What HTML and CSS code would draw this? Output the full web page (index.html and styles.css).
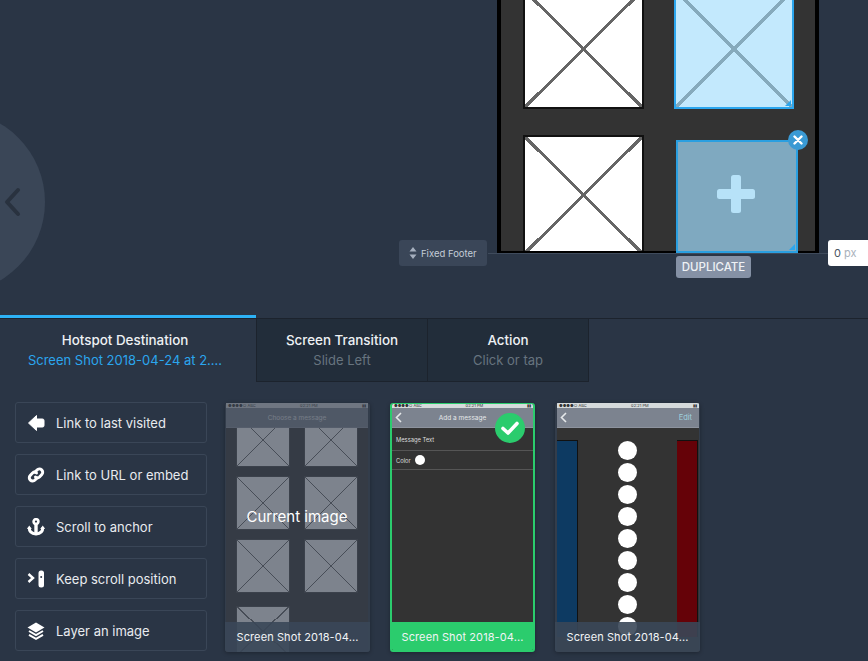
FILE: index.html
```html
<!DOCTYPE html>
<html>
<head>
<title>Hotspot</title>
<link rel="stylesheet" href="styles.css">
</head>
<body>

<div class="stage">
    <div class="prev">
        <svg width="20" height="30" viewBox="0 0 20 30"><path d="M16 3 L5 15 L16 27" fill="none" stroke="#29323f" stroke-width="4" stroke-linecap="round" stroke-linejoin="round"/></svg>
    </div>

    <div class="phone">
        <div class="tile"></div>
        <div class="tile tile_on"><span class="corner"></span></div>
        <div class="tile"></div>
    </div>

    <div class="hotspot">
        <svg width="38" height="38" viewBox="0 0 38 38"><rect x="14" y="0" width="10" height="38" rx="2.5" fill="#b7e2f8"/><rect x="0" y="14" width="38" height="10" rx="2.5" fill="#b7e2f8"/></svg>
        <span class="corner"></span>
    </div>
    <div class="close">
        <svg width="10" height="10" viewBox="0 0 10 10"><path d="M1.5 1.5 L8.5 8.5 M8.5 1.5 L1.5 8.5" stroke="#fff" stroke-width="2.4" stroke-linecap="round"/></svg>
    </div>
    <div class="dup">DUPLICATE</div>

    <div class="footer_line"></div>
    <div class="fixed_footer">
        <svg width="8" height="12" viewBox="0 0 8 12"><path d="M4 0 L7.5 4.5 H0.5 Z M4 12 L7.5 7.5 H0.5 Z" fill="#a5afbe"/></svg>
        Fixed Footer
    </div>
    <div class="px_input">0 <span>px</span></div>
</div>

<div class="tabs">
    <div class="tab tab_on">
        <b>Hotspot Destination</b>
        <span>Screen Shot 2018-04-24 at 2....</span>
    </div>
    <div class="tab tab_w2">
        <b>Screen Transition</b>
        <span>Slide Left</span>
    </div>
    <div class="tab tab_w3">
        <b>Action</b>
        <span>Click or tap</span>
    </div>
</div>

<div class="panel">
    <div class="actions">
        <div class="action">
            <svg width="18" height="18" viewBox="0 0 18 18"><path d="M1.5 9 L9.5 1.5 V5 H15.5 Q17 5 17 6.5 V11.5 Q17 13 15.5 13 H9.5 V16.5 Z" fill="#fff" stroke="#fff" stroke-linejoin="round"/></svg>
            Link to last visited
        </div>
        <div class="action">
            <svg width="18" height="18" viewBox="0 0 18 18"><g fill="none" stroke="#fff" stroke-width="3" stroke-linecap="round"><path d="M8.5 5.5 L10 4 A3.2 3.2 0 0 1 14.8 8.5 L12.5 11 A3 3 0 0 1 8.5 11"/><path d="M9.5 12.5 L8 14 A3.2 3.2 0 0 1 3.2 9.5 L5.5 7 A3 3 0 0 1 9.5 7"/></g></svg>
            Link to URL or embed
        </div>
        <div class="action">
            <svg width="18" height="18" viewBox="0 0 18 18"><g fill="none" stroke="#fff"><circle cx="9" cy="3.6" r="2.4" stroke-width="2.6"/><path d="M9 6 V16" stroke-width="3.4"/><path d="M2.2 9.5 Q2.2 15.5 9 16 Q15.8 15.5 15.8 9.5" stroke-width="3"/></g><path d="M0 11 L2.2 7.5 L4.8 11 Z M13.2 11 L15.8 7.5 L18 11 Z" fill="#fff"/></svg>
            Scroll to anchor
        </div>
        <div class="action">
            <svg width="18" height="18" viewBox="0 0 18 18"><path d="M1.5 4 L6 8 L1.5 12" fill="none" stroke="#fff" stroke-width="2.4"/><rect x="11.5" y="0.5" width="5.5" height="17" rx="2.5" fill="#fff"/><circle cx="14.2" cy="7" r="1" fill="#2a3546"/></svg>
            Keep scroll position
        </div>
        <div class="action">
            <svg width="18" height="18" viewBox="0 0 18 18"><path d="M9 0.5 L17.5 5.5 L9 10.5 L0.5 5.5 Z" fill="#fff"/><path d="M2 9 L9 13 L16 9 M2 12.8 L9 16.8 L16 12.8" fill="none" stroke="#fff" stroke-width="2"/></svg>
            Layer an image
        </div>
    </div>

    <div class="cards">
        <div class="card">
            <div class="shot">
                <div class="status"><span>●●●●○ ABC</span><span>02:21 PM</span><span>▮▮</span></div>
                <div class="navbar"><span class="nav_title">Choose a message</span></div>
                <div class="mini_grid">
                    <div class="mini"></div><div class="mini"></div>
                    <div class="mini"></div><div class="mini"></div>
                    <div class="mini"></div><div class="mini"></div>
                    <div class="mini mini_last"></div>
                </div>
                <div class="dim"></div>
                <div class="current">Current image</div>
            </div>
            <div class="caption">Screen Shot 2018-04...</div>
        </div>

        <div class="card card_on">
            <div class="shot">
                <div class="status"><span>●●●●○ ABC</span><span>02:21 PM</span><span>▮▮</span></div>
                <div class="navbar">
                    <svg class="nav_back" width="7" height="11" viewBox="0 0 7 11"><path d="M6 1 L1.5 5.5 L6 10" fill="none" stroke="#e5e8ea" stroke-width="1.6"/></svg>
                    <span class="nav_title">Add a message</span>
                </div>
                <div class="row row_first">Message Text</div>
                <div class="row">Color <i class="dot"></i></div>
            </div>
            <div class="check">
                <svg width="18" height="14" viewBox="0 0 18 14"><path d="M2 7.5 L7 12 L16 2.5" fill="none" stroke="#fff" stroke-width="3.6" stroke-linecap="round" stroke-linejoin="round"/></svg>
            </div>
            <div class="caption">Screen Shot 2018-04...</div>
        </div>

        <div class="card card_last">
            <div class="shot">
                <div class="status"><span>●●●●○ ABC</span><span>02:21 PM</span><span>▮▮</span></div>
                <div class="navbar">
                    <svg class="nav_back" width="7" height="11" viewBox="0 0 7 11"><path d="M6 1 L1.5 5.5 L6 10" fill="none" stroke="#e5e8ea" stroke-width="1.6"/></svg>
                    <span class="nav_edit">Edit</span>
                </div>
                <div class="sliders">
                    <div class="bar bar_blue"></div>
                    <div class="dots">
                        <i></i><i></i><i></i><i></i><i></i><i></i><i></i><i></i><i></i>
                    </div>
                    <div class="bar bar_red"></div>
                </div>
            </div>
            <div class="caption">Screen Shot 2018-04...</div>
        </div>
    </div>
</div>

</body>
</html>
```

FILE: styles.css
```css
html, body {
    margin: 0;
    height: 100%;
}

body {
    width: 868px;
    height: 661px;
    overflow: hidden;
    background-color: #2a3545;
    font-family: Inter, "Liberation Sans", sans-serif;
    color: #fff;
}

/* top canvas */
.stage {
    position: relative;
    height: 315px;
    overflow: hidden;
}

.prev {
    position: absolute;
    top: 111px;
    left: -137px;
    width: 182px;
    height: 182px;
    border-radius: 91px;
    background-color: #3a4657;
}

.prev svg {
    position: absolute;
    top: 76px;
    left: 139px;
}

.phone {
    position: absolute;
    top: 0;
    left: 497px;
    box-sizing: border-box;
    width: 322px;
    height: 253px;
    overflow: hidden;
    background-color: #333;
    border-left: 4px solid #000;
    border-right: 4px solid #000;
    border-bottom: 2px solid #000;
    display: grid;
    grid-template-columns: 121px 120px;
    grid-auto-rows: 120px;
    column-gap: 30px;
    row-gap: 26px;
    padding-left: 22px;
}

.tile {
    position: relative;
    box-sizing: border-box;
    margin-top: -11px;
    margin-bottom: 11px;
    border: 2px solid #111;
    background-color: #fff;
    background-image:
        linear-gradient(to top right, transparent calc(50% - 1.5px), #666 calc(50% - 1.5px), #666 calc(50% + 1.5px), transparent calc(50% + 1.5px)),
        linear-gradient(to bottom right, transparent calc(50% - 1.5px), #666 calc(50% - 1.5px), #666 calc(50% + 1.5px), transparent calc(50% + 1.5px));
}

.tile_on {
    border-color: #2ba6ee;
    background-color: #c3e9fd;
    background-image:
        linear-gradient(to top right, transparent calc(50% - 1.5px), #86aabc calc(50% - 1.5px), #86aabc calc(50% + 1.5px), transparent calc(50% + 1.5px)),
        linear-gradient(to bottom right, transparent calc(50% - 1.5px), #86aabc calc(50% - 1.5px), #86aabc calc(50% + 1.5px), transparent calc(50% + 1.5px));
}

.corner {
    position: absolute;
    right: 1px;
    bottom: 1px;
    width: 0;
    height: 0;
    border-left: 6px solid transparent;
    border-bottom: 6px solid #2ba6ee;
}

.hotspot {
    position: absolute;
    top: 140px;
    left: 676px;
    box-sizing: border-box;
    width: 122px;
    height: 113px;
    border: 2px solid #2a9fe0;
    background-color: #7fa9c0;
    display: flex;
    align-items: center;
    justify-content: center;
}

.hotspot svg {
    margin: 0 2px 5px 0;
}

.close {
    position: absolute;
    top: 130px;
    left: 788px;
    width: 20px;
    height: 20px;
    border-radius: 10px;
    background-color: #3a9ad4;
    display: flex;
    align-items: center;
    justify-content: center;
}

.dup {
    position: absolute;
    top: 256px;
    left: 676px;
    width: 75px;
    height: 22px;
    line-height: 22px;
    text-align: center;
    border-radius: 3px;
    background-color: #8591a5;
    font-size: 11.5px;
    font-weight: 500;
    color: #eef1f5;
}

.footer_line {
    position: absolute;
    top: 253px;
    left: 488px;
    width: 340px;
    height: 1px;
    background-color: #3f4b5c;
}

.fixed_footer {
    position: absolute;
    top: 240px;
    left: 399px;
    box-sizing: border-box;
    width: 88px;
    height: 26px;
    padding-left: 10px;
    display: flex;
    align-items: center;
    gap: 4px;
    border-radius: 3px;
    background-color: #3a4658;
    font-size: 9.5px;
    color: #c4ccd7;
}

.px_input {
    position: absolute;
    top: 240px;
    left: 828px;
    width: 40px;
    height: 26px;
    box-sizing: border-box;
    padding-left: 6px;
    line-height: 26px;
    border-radius: 3px 0 0 3px;
    background-color: #fff;
    font-size: 11px;
    color: #4a5462;
}

.px_input span {
    color: #aab1bb;
}

/* tabs */
.tabs {
    display: flex;
    height: 63px;
    margin-top: 3px;
    border-top: 1px solid #1c232d;
}

.tab {
    box-sizing: border-box;
    display: flex;
    flex-direction: column;
    align-items: center;
    padding-top: 13px;
    gap: 4px;
    background-color: #222d3a;
    border-right: 1px solid #1c232d;
    border-bottom: 1px solid #1c232d;
}

.tab b {
    font-size: 13.4px;
    font-weight: 500;
    color: #eef1f4;
}

.tab span {
    font-size: 13px;
    color: #67747f;
}

.tab_on {
    position: relative;
    width: 256px;
    padding-right: 6px;
    background-color: #2a3545;
    border-bottom: none;
    border-right: none;
}

/* blue bar sits above the row line */
.tab_on::before {
    content: "";
    position: absolute;
    top: -4px;
    left: 0;
    width: 100%;
    height: 3px;
    background-color: #2db2f5;
}

.tab_on span {
    color: #2ba6ee;
}

.tab_w2 {
    width: 172px;
    border-left: 1px solid #1c232d;
}

.tab_w3 {
    width: 161px;
}

/* panel under the tabs */
.panel {
    display: flex;
    padding: 20px 0 0 15px;
}

.actions {
    display: flex;
    flex-direction: column;
    gap: 11px;
    width: 192px;
}

.action {
    box-sizing: border-box;
    height: 41px;
    padding-left: 11px;
    display: flex;
    align-items: center;
    gap: 11px;
    border: 1px solid #3a4657;
    border-radius: 3px;
    font-size: 13px;
    color: #e8ebef;
}

.cards {
    display: flex;
    gap: 20px;
    margin-left: 18px;
    margin-top: 1px;
}

.card {
    position: relative;
    box-sizing: border-box;
    width: 145px;
    height: 249px;
    border-radius: 3px;
    overflow: hidden;
    background-color: #333d4b;
    box-shadow: 0 1px 4px rgba(0, 0, 0, 0.3);
}

.card_on {
    border: 2px solid #2bcc6d;
    border-top-width: 1px;
}

.shot {
    position: relative;
    height: 100%;
    margin: 0 2px 0 1px;
    background-color: #333;
    overflow: hidden;
}

.card_on .shot {
    margin: 0;
}

.card_last .shot {
    margin: 0 1px 0 2px;
}

.status {
    height: 5px;
    padding: 0 2px;
    display: flex;
    justify-content: space-between;
    align-items: center;
    background-color: #d6dbdc;
    font-size: 4px;
    line-height: 4px;
    overflow: hidden;
    color: #333;
}

.card_on .status {
    height: 4px;
}

.navbar {
    position: relative;
    height: 19px;
    background-color: #7c838f;
    border-bottom: 1px solid #8d939e;
    display: flex;
    align-items: center;
    justify-content: center;
}

.nav_title {
    font-size: 6.5px;
    color: #e5e8ea;
}

.nav_back {
    position: absolute;
    top: 4px;
    left: 3px;
}

.nav_edit {
    position: absolute;
    top: 5px;
    right: 7px;
    font-size: 7.5px;
    color: #9fd0de;
}

.mini_grid {
    display: grid;
    grid-template-columns: 54px 54px;
    grid-auto-rows: 54px;
    column-gap: 14px;
    row-gap: 9px;
    padding-left: 10px;
    margin-top: -15px;
}

.mini {
    box-sizing: border-box;
    border: 1px solid #444;
    background-color: #fff;
    background-image:
        linear-gradient(to top right, transparent calc(50% - 0.7px), #666 calc(50% - 0.7px), #666 calc(50% + 0.7px), transparent calc(50% + 0.7px)),
        linear-gradient(to bottom right, transparent calc(50% - 0.7px), #666 calc(50% - 0.7px), #666 calc(50% + 0.7px), transparent calc(50% + 0.7px));
}

.mini_last {
    margin-top: 4px;
}

.dim {
    position: absolute;
    top: 0;
    right: 0;
    bottom: 0;
    left: 0;
    background-color: rgba(55, 65, 80, 0.65);
}

.current {
    position: absolute;
    top: 104px;
    left: 0;
    width: 100%;
    text-align: center;
    font-size: 15px;
    color: #fff;
}

.row {
    height: 18px;
    padding-left: 4px;
    display: flex;
    align-items: center;
    gap: 4px;
    font-size: 5.8px;
    color: #ddd;
    border-bottom: 1px solid #555;
}

.row_first {
    height: 22px;
}

.dot {
    display: block;
    width: 10px;
    height: 10px;
    border-radius: 5px;
    background-color: #fff;
}

.check {
    position: absolute;
    top: 9px;
    left: 103px;
    width: 30px;
    height: 30px;
    border-radius: 15px;
    background-color: #2bcc6d;
    display: flex;
    align-items: center;
    justify-content: center;
}

.sliders {
    display: flex;
    justify-content: space-between;
    padding: 12px 1px 0 0;
}

.bar {
    width: 20px;
    height: 196px;
    border: 1px solid #111;
    border-width: 1px 1px 0 0;
}

.bar_blue {
    background-color: #0d3a62;
}

.bar_red {
    background-color: #650208;
}

.dots {
    display: flex;
    flex-direction: column;
    gap: 3px;
    margin-top: 1px;
}

.dots i {
    display: block;
    width: 19px;
    height: 19px;
    border-radius: 10px;
    background-color: #fff;
}

.caption {
    position: absolute;
    left: 0;
    right: 0;
    bottom: 0;
    height: 30px;
    line-height: 30px;
    text-align: center;
    font-size: 11px;
    letter-spacing: 0.1px;
    color: #f2f4f6;
    background-color: rgba(58, 71, 88, 0.9);
}

.card_on .caption {
    left: -2px;
    right: -2px;
    bottom: -2px;
    background-color: #2bcc6d;
}
```
